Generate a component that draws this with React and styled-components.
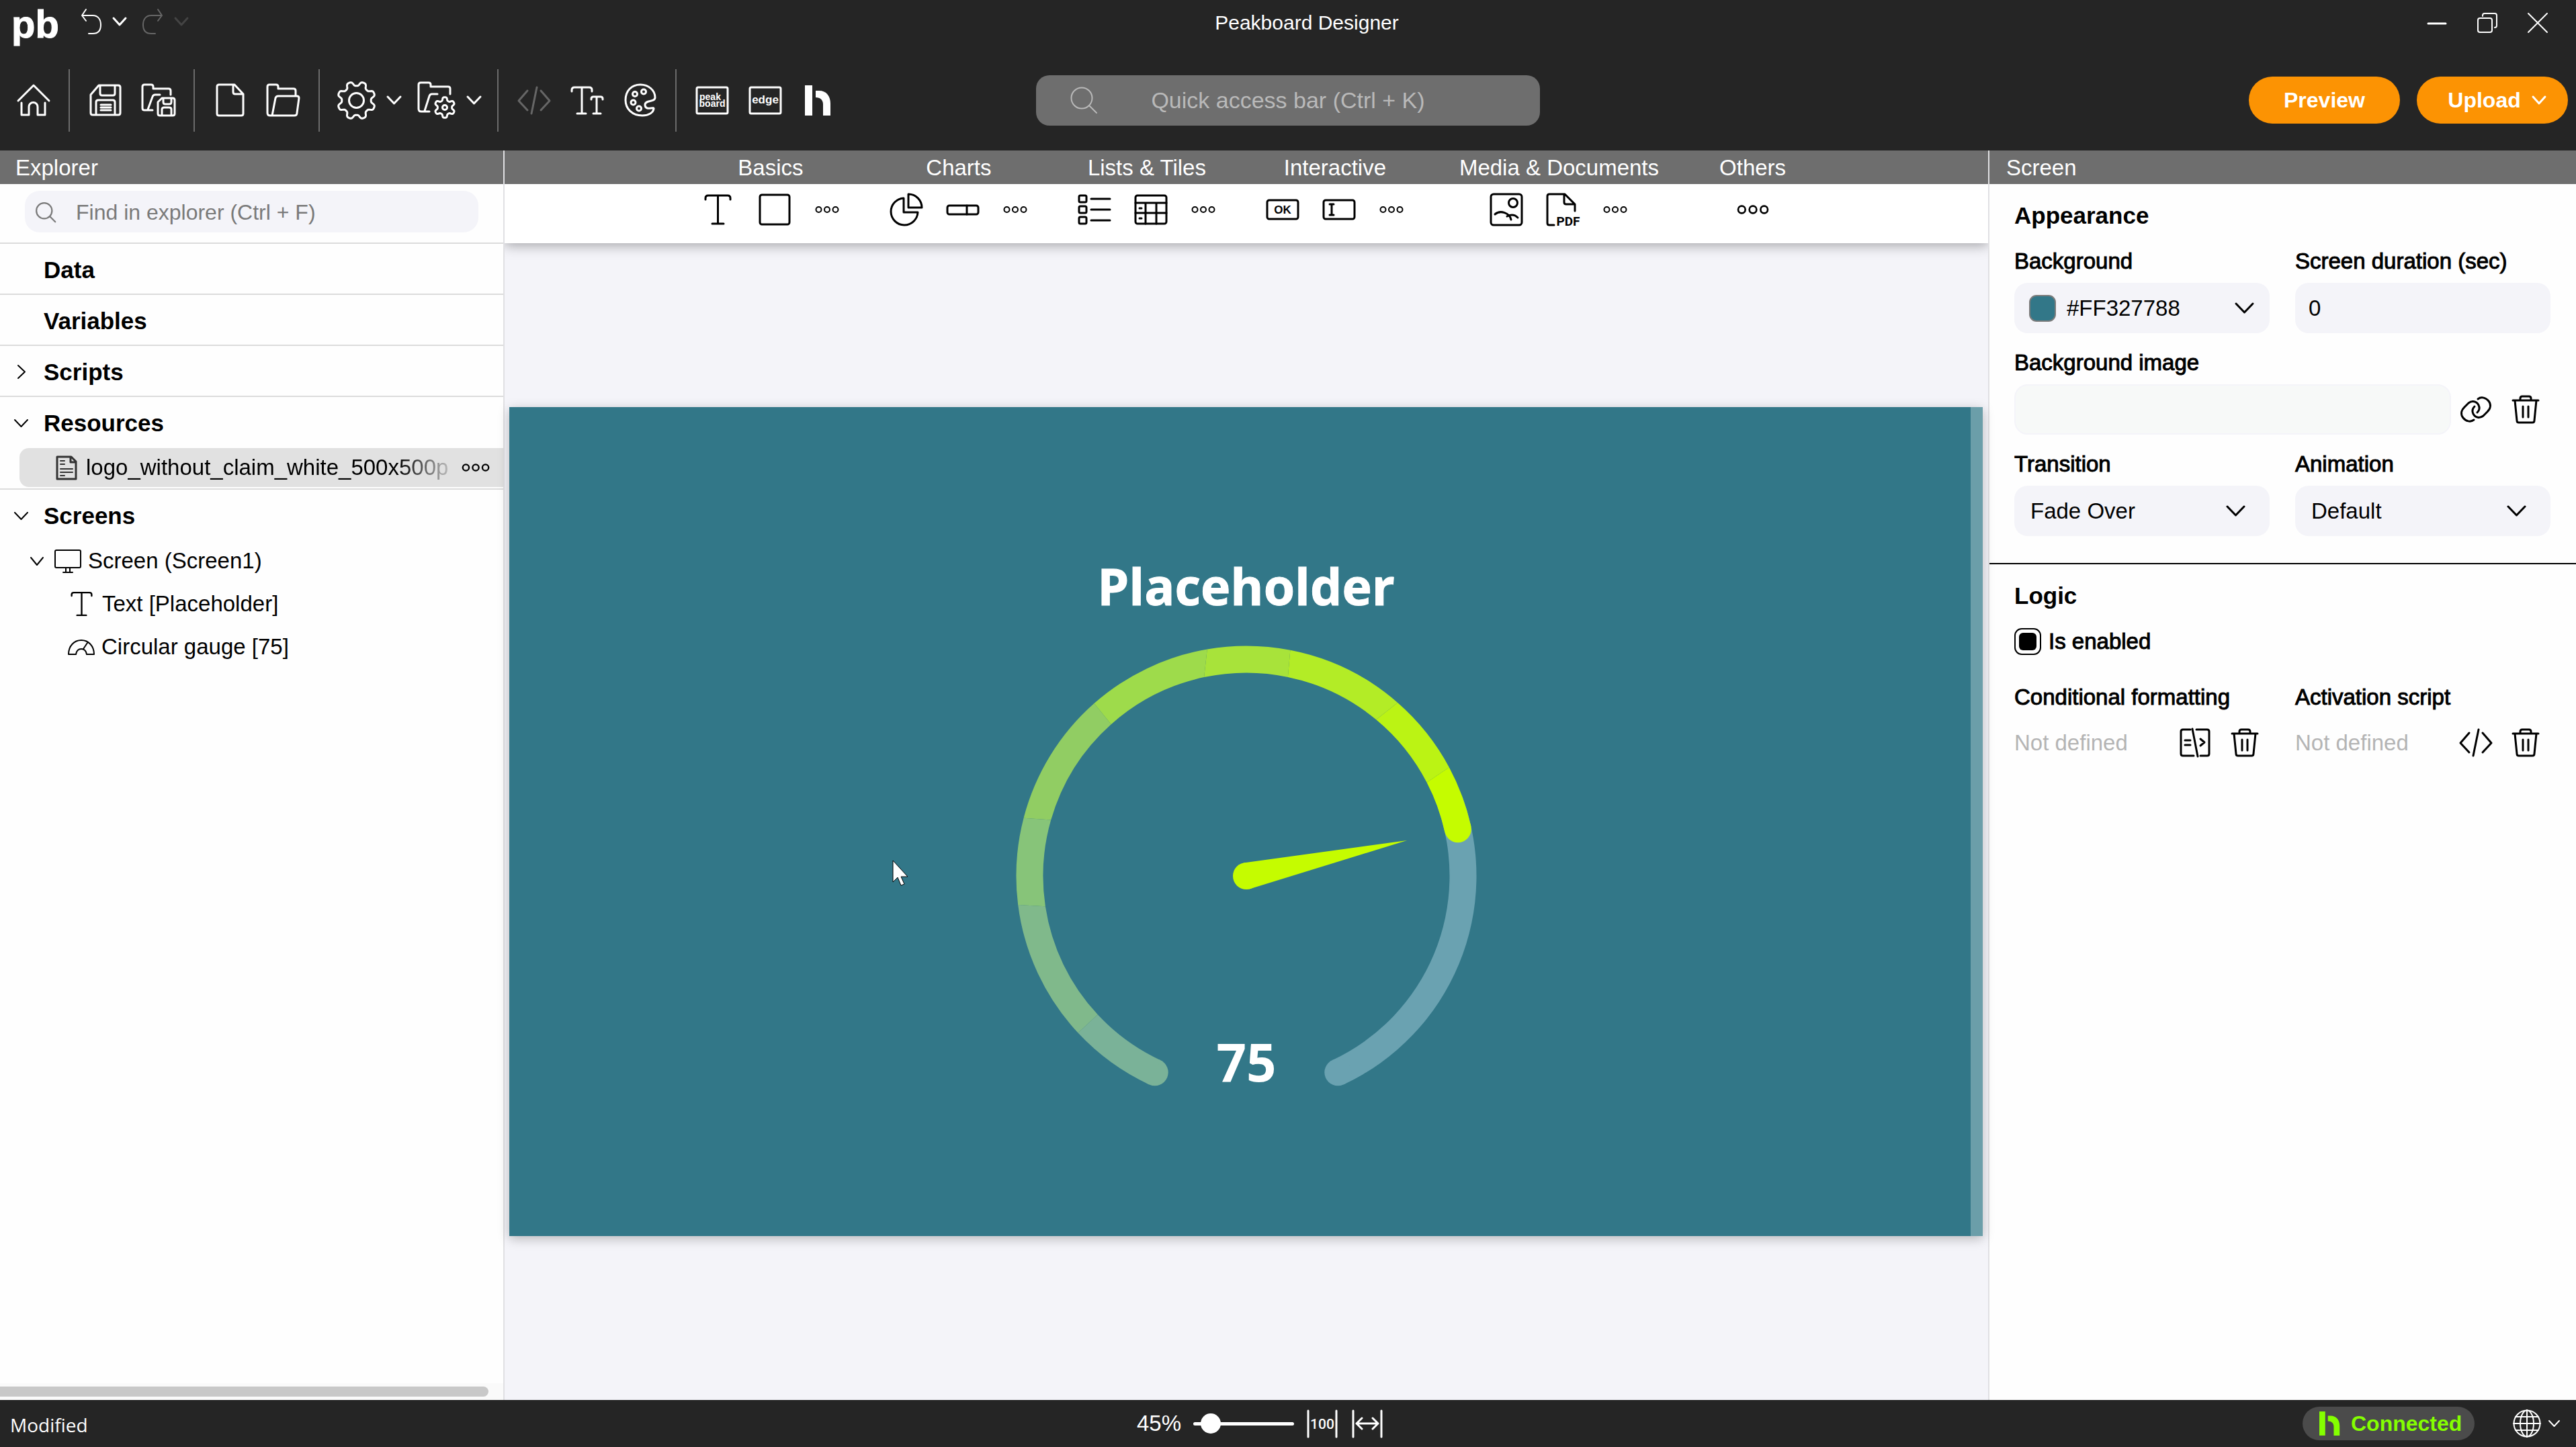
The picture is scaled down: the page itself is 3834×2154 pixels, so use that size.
import React, { useState } from "react";
import styled, { createGlobalStyle, css } from "styled-components";

const GlobalStyle = createGlobalStyle`
  *, *::before, *::after { box-sizing: border-box; }
  body { margin: 0; background: #f4f4f9; }
  body, button, input, select {
    font-family: "Liberation Sans", Arial, sans-serif;
    font-size: 33px;
    line-height: 40px;
    color: #000;
  }
  button, input, select { margin: 0; padding: 0; border: 0; background: none; outline: none; }
  h1, h2, h3, p, ul { margin: 0; padding: 0; font: inherit; list-style: none; }
`;

/* ---------- drawings ---------- */

const Drawing = styled.svg`
  flex-shrink: 0;
  overflow: visible;
`;

const Icon = ({ w, h, sw = 3, children }) => (
  <Drawing
    width={w}
    height={h}
    viewBox={`0 0 ${w} ${h}`}
    fill="none"
    stroke="currentColor"
    strokeWidth={sw}
    strokeLinecap="round"
    strokeLinejoin="round"
    aria-hidden="true"
  >
    {children}
  </Drawing>
);

const gearPath = (cx, cy, inner, outer, teeth, phase) => {
  const mid = (inner + outer) / 2;
  const amp = (outer - inner) / 2;
  const points = [];
  for (let i = 0; i < 180; i += 1) {
    const a = (i / 180) * Math.PI * 2;
    const r = mid + amp * Math.tanh(1.8 * Math.cos(teeth * (a - phase)));
    points.push(`${(cx + r * Math.sin(a)).toFixed(2)} ${(cy - r * Math.cos(a)).toFixed(2)}`);
  }
  return `M${points.join("L")}Z`;
};

const Chevron = ({ w = 23, h = 14, sw = 3 }) => (
  <Icon w={w} h={h} sw={sw}>
    <path d={`M2 2L${w / 2} ${h - 2}L${w - 2} 2`} />
  </Icon>
);
const ChevronRight = () => (
  <Icon w={14} h={23} sw={2}>
    <path d="M2 2L12 11.5L2 21" />
  </Icon>
);
const Undo = () => (
  <Icon w={30} h={40} sw={2}>
    <path d="M7 2L1 11L7 19M1 11H17C25 11 29 17 29 25S25 38 17 38H11" />
  </Icon>
);
const Redo = () => (
  <Icon w={30} h={40} sw={2}>
    <path d="M23 2L29 11L23 19M29 11H13C5 11 1 17 1 25S5 38 13 38H19" />
  </Icon>
);
const Minimize = () => (
  <Icon w={30} h={30} sw={3}>
    <path d="M2 16H28" />
  </Icon>
);
const Restore = () => (
  <Icon w={30} h={30} sw={2}>
    <rect x="1" y="8" width="21" height="21" rx="3" />
    <path d="M8 5V4q0-3 3-3H26q3 0 3 3V19q0 3-3 3" />
  </Icon>
);
const Close = () => (
  <Icon w={30} h={30} sw={2}>
    <path d="M1 1L29 29M29 1L1 29" />
  </Icon>
);
const Home = () => (
  <Icon w={50} h={48}>
    <path d="M2 25L25 2L48 25M7 28V46H18V34a6 6 0 0 1 13 0V46H42V28" />
  </Icon>
);
const Save = () => (
  <Icon w={48} h={48}>
    <path d="M14 2H43q3 0 3 3V43q0 3-3 3H5q-3 0-3-3V16zM16 2V14q0 3 3 3H35q3 0 3-3V2M10 46V27q0-3 3-3H35q3 0 3 3V46M17 31H32M17 35H32M17 39H32" />
  </Icon>
);
const SaveAll = () => (
  <Icon w={52} h={50}>
    <path d="M44 17V11q0-3-3-3H18V5q0-3-3-3H5Q2 2 2 5V37q0 3 3 3H17M28 17H21q-3 0-4 3L10 39" />
    <path d="M31 22H47q3 0 3 3V45q0 3-3 3H28q-3 0-3-3V28zM33 22V28q0 3 3 3h6q3 0 3-3V22M31 48V39q0-3 3-3h8q3 0 3 3v9" />
  </Icon>
);
const NewFile = () => (
  <Icon w={43} h={50}>
    <path d="M28 2H5Q2 2 2 5V45q0 3 3 3H38q3 0 3-3V16zM26 2V13q0 3 3 3H41" />
  </Icon>
);
const OpenFolder = () => (
  <Icon w={51} h={50}>
    <path d="M44 18V11q0-3-3-3H18V5q0-3-3-3H5Q2 2 2 5V44q0 4 4 4H42q4 0 4-4L49 22q0-3-3-3H18q-3 0-4 3L9 48" />
  </Icon>
);
const Gear = () => (
  <Icon w={57} h={57}>
    <path d={gearPath(28.5, 28.5, 21.5, 28.5, 8, Math.PI / 8)} />
    <circle cx="28.5" cy="28.5" r="11" />
  </Icon>
);
const FolderGear = () => (
  <Icon w={57} h={57}>
    <path d="M49 19V11q0-3-3-3H20V5q0-3-3-3H5Q2 2 2 5V41q0 4 4 4H18M30 19H22q-3 0-4 3L11 44" />
    <path d={gearPath(41, 39, 10.5, 15.5, 6, 0)} />
    <circle cx="41" cy="39" r="3.5" />
  </Icon>
);
const Code = () => (
  <Icon w={50} h={43}>
    <path d="M15 7L2 22L15 36M35 7L48 22L35 36M29 2L21 41" />
  </Icon>
);
const Typography = () => (
  <Icon w={50} h={43}>
    <path d="M2 8V6q0-4 4-4H28q4 0 4 4v2M17 2V41M10 41H23M31 20V19q0-3 3-3H45q3 0 3 3v1M39 16V41M34 41H45" />
  </Icon>
);
const Palette = () => (
  <Icon w={48} h={50}>
    <path d="M24 2C37 2 46 11 46 21C46 29 31 24 31 32C31 42 45 34 44 38C43 44 36 48 27 48C12 48 2 38 2 25C2 11 11 2 24 2Z" />
    <circle cx="16" cy="16" r="3.5" />
    <circle cx="29" cy="12.5" r="3.5" />
    <circle cx="13.5" cy="28.5" r="3.5" />
    <circle cx="22" cy="37.5" r="3.5" />
  </Icon>
);
const SvgWord = styled.text`
  font-family: ${(p) => p.$family || '"Liberation Sans", Arial, sans-serif'};
  font-weight: ${(p) => p.$weight || 700};
  font-size: ${(p) => p.$size}px;
  fill: ${(p) => p.$fill || "currentColor"};
  stroke: none;
  text-anchor: middle;
`;
const PeakboardBox = () => (
  <Icon w={50} h={43}>
    <rect x="2" y="2" width="46" height="39" rx="2" />
    <SvgWord $size={14} x="22" y="21">peak</SvgWord>
    <SvgWord $size={14} x="25" y="31">board</SvgWord>
  </Icon>
);
const EdgeBox = () => (
  <Icon w={50} h={43}>
    <rect x="2" y="2" width="46" height="39" rx="2" />
    <SvgWord $size={17} x="25" y="26">edge</SvgWord>
  </Icon>
);
const HubMark = ({ w = 39, h = 45 }) => (
  <Drawing width={w} height={h} viewBox="0 0 39 45" fill="currentColor" aria-hidden="true">
    <rect width="11" height="45" />
    <path d="M16 8H21C32 8 38 16 38 27V45H27V28C27 22 23 18 16 18Z" />
  </Drawing>
);
const Search = ({ size = 40, sw = 2 }) => (
  <Drawing width={size} height={size} viewBox="0 0 40 40" fill="none" stroke="currentColor" strokeWidth={sw} strokeLinecap="round" aria-hidden="true">
    <circle cx="17" cy="17" r="15.5" />
    <path d="M28 28L39 39" />
  </Drawing>
);
const TextTool = ({ w = 41, h = 46, sw = 3 }) => (
  <Drawing width={w} height={h} viewBox="0 0 41 46" fill="none" stroke="currentColor" strokeWidth={sw} strokeLinecap="round" aria-hidden="true">
    <path d="M2 8V6q0-4 4-4H35q4 0 4 4v2M20.5 2V44M12 44H29" />
  </Drawing>
);
const BoxTool = () => (
  <Icon w={48} h={48}>
    <rect x="2" y="2" width="44" height="44" rx="3" />
  </Icon>
);
const Dots = ({ w = 36, sw = 2 }) => (
  <Drawing width={w} height={w / 3} viewBox="0 0 36 12" fill="none" stroke="currentColor" strokeWidth={sw} aria-hidden="true">
    <circle cx="5.5" cy="6" r="4" />
    <circle cx="18" cy="6" r="4" />
    <circle cx="30.5" cy="6" r="4" />
  </Drawing>
);
const Pie = () => (
  <Icon w={50} h={50}>
    <path d="M21 8A20 20 0 1 0 42 29H21ZM28 2V22H48A20 20 0 0 0 28 2Z" />
  </Icon>
);
const Progress = () => (
  <Icon w={50} h={17}>
    <rect x="2" y="2" width="46" height="13" rx="3" />
    <path d="M31 2V15" />
  </Icon>
);
const ListTool = () => (
  <Icon w={50} h={46}>
    <rect x="2" y="2" width="11" height="10" rx="2" />
    <rect x="2" y="18" width="11" height="10" rx="2" />
    <rect x="2" y="34" width="11" height="10" rx="2" />
    <path d="M20 7H48M20 23H48M20 39H48" />
  </Icon>
);
const TableTool = () => (
  <Icon w={50} h={46}>
    <rect x="2" y="2" width="46" height="42" rx="3" />
    <path d="M2 13H48M2 28H48M17 13V44M33 13V44M8 21H11M8 36H11" />
  </Icon>
);
const ButtonTool = () => (
  <Icon w={50} h={32}>
    <rect x="2" y="2" width="46" height="28" rx="3" />
    <SvgWord $size={17} x="25" y="22">OK</SvgWord>
  </Icon>
);
const InputTool = () => (
  <Icon w={50} h={32}>
    <rect x="2" y="2" width="46" height="28" rx="3" />
    <path d="M11 8H17M14 8V24M11 24H17" />
  </Icon>
);
const ImageTool = () => (
  <Icon w={50} h={50}>
    <rect x="2" y="2" width="46" height="46" rx="4" />
    <circle cx="35" cy="15" r="6.5" />
    <path d="M8 32C16 25 30 30 32 40M26 35C32 32 38 33 42 37" />
  </Icon>
);
const PdfTool = () => (
  <Icon w={50} h={50}>
    <path d="M12 48H5Q2 48 2 45V5Q2 2 5 2H28L43 17V27M27 2V14q0 3 3 3H43" />
    <SvgWord $family="Roboto, sans-serif" $size={19} x="33" y="49">PDF</SvgWord>
  </Icon>
);
const FileLines = () => (
  <Icon w={32} h={37} sw={3}>
    <path d="M2 2H23L30 9V35H2ZM22 2V10H30" stroke="#333" />
    <path d="M7 8H13M7 13H13M7 20H25M7 25H25M7 30H13" stroke="#333" strokeWidth="2" />
  </Icon>
);
const Monitor = () => (
  <Icon w={40} h={35} sw={2}>
    <rect x="1" y="1" width="38" height="26" rx="2" />
    <path d="M17 27V34M23 27V34M13 34H27" />
  </Icon>
);
const GaugeIcon = () => (
  <Icon w={40} h={23} sw={2}>
    <path d="M1 22C1 10 9 1 20 1S39 10 39 22H28C27 16 24 14 20 14S13 16 12 22ZM23 14L29 5" />
  </Icon>
);
const LinkIcon = () => (
  <Icon w={46} h={37}>
    <path d="M20 34C15 38 8 36 4 31C0 26 1 20 6 15L12 9C17 5 24 6 27 12C29 16 28 20 25 23" />
    <path d="M26 3C31-1 38 1 42 6C46 11 45 17 40 22L34 28C29 32 22 31 19 25C17 21 18 17 21 14" />
  </Icon>
);
const Trash = () => (
  <Icon w={42} h={43}>
    <path d="M2 8H40M13 8V5q0-3 3-3H26q3 0 3 3V8M5 8L8 38q0 3 3 3H31q3 0 3-3L37 8M17 17V33M25 17V33" />
  </Icon>
);
const ConditionIcon = () => (
  <Icon w={46} h={45}>
    <path d="M16 3H5Q2 3 2 6V39q0 3 3 3H21M25 3H41q3 0 3 3V39q0 3-3 3H31M19 2L27 43M8 19H16M8 26H16M31 17L37 22L31 27" />
  </Icon>
);
const Globe = () => (
  <Icon w={42} h={42} sw={2}>
    <circle cx="21" cy="21" r="19.5" />
    <ellipse cx="21" cy="21" rx="10" ry="19.5" />
    <path d="M1 21H41M4 11H38M4 31H38M21 1V41" />
  </Icon>
);
const ActualSize = () => (
  <Icon w={46} h={43}>
    <path d="M2 2V41M44 2V41" />
    <SvgWord $family="Roboto, sans-serif" $size={21} $weight={500} x="23" y="29">100</SvgWord>
  </Icon>
);
const FitWidth = () => (
  <Icon w={46} h={43}>
    <path d="M2 2V41M44 2V41M7 21H39M15 13L7 21L15 29M31 13L39 21L31 29" />
  </Icon>
);

/* ---------- shell ---------- */

const Shell = styled.div`
  display: flex;
  flex-direction: column;
  min-height: 100vh;
`;
const Header = styled.header`
  background: #252525;
  color: #fff;
`;
const TitleBar = styled.div`
  display: flex;
  align-items: center;
  height: 68px;
`;
const TitleTools = styled.div`
  display: flex;
  align-items: center;
  width: 301px;
  padding-left: 17px;
`;
const Logo = styled.span`
  width: 95px;
  padding-top: 4px;
  font-size: 58px;
  font-weight: 700;
  line-height: 64px;
  -webkit-text-stroke: 1px #fff;
`;
const HistoryButton = styled.button`
  display: flex;
  align-items: center;
  justify-content: center;
  width: ${(p) => p.$w}px;
  height: 60px;
  padding-bottom: 4px;
  color: ${(p) => p.$color || "#fff"};
`;
const AppTitle = styled.h1`
  flex: 1;
  text-align: center;
  font-size: 30px;
`;
const WindowButtons = styled.div`
  display: flex;
  padding-right: 20px;
`;
const WindowButton = styled.button`
  display: grid;
  place-items: center;
  width: 75px;
  height: 68px;
  color: #fff;
`;
const Toolbar = styled.div`
  display: grid;
  grid-template-columns: 1fr 750px 1fr;
  align-items: center;
  height: 156px;
  padding-bottom: 6px;
`;
const ToolRow = styled.div`
  display: flex;
  align-items: center;
  padding: 12px 0 0 10px;
`;
const ToolButton = styled.button`
  display: grid;
  place-items: center;
  width: 79px;
  height: 79px;
  color: ${(p) => (p.disabled ? "#666" : "#fff")};
`;
const SplitTool = styled.button`
  display: flex;
  align-items: center;
  gap: 16px;
  width: 119px;
  height: 79px;
  padding-left: 13px;
  color: #fff;
`;
const ToolDivider = styled.span`
  width: 2px;
  height: 93px;
  margin: 0 13px;
  background: #6b6b6b;
`;
const QuickSearch = styled.label`
  display: grid;
  align-items: center;
  height: 75px;
  margin-top: 12px;
  padding: 0 51px;
  border-radius: 20px;
  background: #6e6e6e;
  color: #b9b9b9;
  & > * { grid-area: 1 / 1; }
`;
const QuickInput = styled.input`
  width: 100%;
  text-align: center;
  font-size: 34px;
  &::placeholder { color: #b9b9b9; opacity: 1; }
`;
const Actions = styled.div`
  display: flex;
  justify-content: flex-end;
  gap: 25px;
  padding: 12px 12px 0 0;
`;
const PillButton = styled.button`
  display: flex;
  align-items: center;
  justify-content: center;
  gap: 16px;
  width: 225px;
  height: 70px;
  padding-left: ${(p) => (p.$menu ? 14 : 0)}px;
  border-radius: 35px;
  background: #fc9303;
  color: #fff;
  font-size: 32px;
  font-weight: 700;
`;
const Body = styled.main`
  flex: 1;
  display: grid;
  grid-template-columns: 751px minmax(0, 1fr) 875px;
`;
const Band = styled.h2`
  height: 50px;
  padding: 6px ${(p) => p.$pad}px 4px;
  background: #6e6e6e;
  color: #fff;
`;

/* ---------- explorer ---------- */

const Explorer = styled.aside`
  display: flex;
  flex-direction: column;
  border-right: 2px solid #e0e0e3;
  background: #fefefe;
`;
const ExplorerSearch = styled.div`
  padding: 10px 37px 15px;
  border-bottom: 2px solid #dcdcdc;
`;
const SearchField = styled.label`
  display: flex;
  align-items: center;
  gap: 30px;
  height: 62px;
  padding: 2px 16px 0;
  border-radius: 22px;
  background: #f4f4f9;
  color: #7a7a7a;
`;
const SearchInput = styled.input`
  flex: 1;
  font-size: 32px;
  &::placeholder { color: #7a7a7a; opacity: 1; }
`;
const Group = styled.section`
  ${(p) =>
    !p.$last &&
    css`
      border-bottom: 2px solid #dcdcdc;
    `}
`;
const GroupButton = styled.button`
  display: grid;
  grid-template-columns: 23px 1fr;
  justify-items: center;
  align-items: center;
  gap: 22px;
  width: 100%;
  height: 74px;
  padding: 3px 20px 0;
`;
const GroupName = styled.span`
  justify-self: start;
  font-size: 35px;
  font-weight: 700;
`;
const TreeRow = styled.div`
  display: flex;
  align-items: center;
  gap: ${(p) => p.$gap || 10}px;
  height: 64px;
  padding-left: ${(p) => p.$indent}px;
`;
const TreeToggle = styled.button`
  display: flex;
  margin-right: 5px;
`;
const ResourceRow = styled.div`
  display: flex;
  align-items: center;
  justify-content: space-between;
  height: 58px;
  margin: 2px 0 2px 29px;
  padding: 0 20px 0 54px;
  border-radius: 14px 0 0 14px;
  background: #e1e1e1;
`;
const ResourceFile = styled.span`
  display: flex;
  align-items: center;
  gap: 13px;
`;
const ResourceName = styled.span`
  white-space: nowrap;
  mask-image: linear-gradient(to right, #000 86%, transparent 103%);
`;
const MoreButton = styled.button`
  display: flex;
`;
const ScrollTrack = styled.div`
  margin-top: auto;
  padding: 5px 0;
  background: #fafafa;
`;
const ScrollThumb = styled.div`
  width: 97%;
  height: 15px;
  border-radius: 0 8px 8px 0;
  background: #c8c8c8;
`;

/* ---------- workspace ---------- */

const Workspace = styled.section`
  display: flex;
  flex-direction: column;
`;
const Ribbon = styled.div`
  display: flex;
  justify-content: center;
  background: linear-gradient(#6e6e6e 50px, #fff 50px);
  box-shadow: 0 3px 18px rgba(0, 0, 0, 0.35);
  clip-path: inset(0 0 -40px 0);
`;
const RibbonGroup = styled.div`
  display: flex;
  flex-direction: column;
  align-items: center;
  padding: 0 20px;
`;
const RibbonLabel = styled.h3`
  height: 50px;
  padding: 6px 25px 4px;
  color: #fff;
  white-space: nowrap;
`;
const RibbonItems = styled.div`
  display: flex;
  align-items: center;
  height: 88px;
  padding-bottom: 12px;
`;
const RibbonButton = styled.button`
  display: grid;
  place-items: center;
  width: ${(p) => p.$w || 84}px;
  height: 70px;
`;
const Stage = styled.div`
  flex: 1;
  display: flex;
  align-items: center;
  padding: 0 8px 0 7px;
  background: #f4f4f9;
`;
const Artboard = styled.div`
  position: relative;
  flex: 1;
  display: flex;
  flex-direction: column;
  align-items: center;
  gap: 39px;
  aspect-ratio: 2193 / 1234;
  padding-top: 216px;
  background: #327788;
  box-shadow: 0 4px 16px rgba(0, 0, 0, 0.25);
`;
const ArtboardEdge = styled.span`
  position: absolute;
  inset: 0 0 0 auto;
  width: 18px;
  background: #6b9ea9;
`;
const ArtboardTitle = styled.p`
  font-family: "Open Sans", "Noto Sans", sans-serif;
  font-size: 75px;
  font-weight: 700;
  line-height: 100px;
  color: #fff;
  -webkit-text-stroke: 1px #fff;
`;
const Pointer = styled.svg`
  position: absolute;
  left: 570px;
  top: 674px;
`;

/* ---------- properties ---------- */

const Properties = styled.aside`
  border-left: 2px solid #e0e0e3;
  background: #fefefe;
`;
const PropertySection = styled.section`
  display: flex;
  flex-direction: column;
  padding: 27px 38px 40px 37px;
  & + & { border-top: 2px solid #000; }
`;
const SectionTitle = styled.h3`
  margin-bottom: 28px;
  font-size: 35px;
  font-weight: 700;
`;
const PropertyGrid = styled.div`
  display: grid;
  grid-template-columns: 1fr 1fr;
  gap: 24px 38px;
`;
const Property = styled.div`
  display: flex;
  flex-direction: column;
  gap: 12px;
  grid-column: ${(p) => (p.$wide ? "1 / -1" : "auto")};
`;
const PropertyLabel = styled.label`
  white-space: nowrap;
  -webkit-text-stroke: 1px #000;
`;
const fieldLook = css`
  width: 100%;
  height: 75px;
  border-radius: 20px;
  background: #f4f4f9;
`;
const TextField = styled.input`
  ${fieldLook}
  padding: 0 20px;
`;
const EmptyField = styled.input`
  ${fieldLook}
  flex: 1;
  padding: 0 20px;
  border: 2px solid #f4f4f9;
  background: #f7f9f8;
`;
const SelectBox = styled.div`
  display: grid;
  align-items: center;
  & > * { grid-area: 1 / 1; }
  & > svg {
    justify-self: end;
    margin-right: ${(p) => p.$inset}px;
    pointer-events: none;
  }
`;
const Select = styled.select`
  ${fieldLook}
  appearance: none;
  padding-left: ${(p) => p.$pad}px;
`;
const Swatch = styled.span`
  width: 40px;
  height: 40px;
  margin-left: 22px;
  border: 2px solid #7c7c7c;
  border-radius: 11px;
  background: #327788;
`;
const FieldRow = styled.div`
  display: flex;
  align-items: center;
  height: ${(p) => p.$h}px;
`;
const Unset = styled.span`
  flex: 1;
  padding-top: 2px;
  color: #b4b4b4;
`;
const FieldButton = styled.button`
  display: grid;
  place-items: center;
  width: 74px;
  height: 70px;
`;
const CheckRow = styled.label`
  display: flex;
  align-items: center;
  gap: 11px;
  margin-bottom: 43px;
  -webkit-text-stroke: 1px #000;
`;
const CheckBox = styled.input`
  appearance: none;
  display: grid;
  place-items: center;
  width: 40px;
  height: 40px;
  border: 2px solid #000;
  border-radius: 11px;
  &:checked::before {
    content: "";
    width: 26px;
    height: 26px;
    border-radius: 6px;
    background: #000;
  }
`;

/* ---------- status bar ---------- */

const StatusBar = styled.footer`
  display: flex;
  align-items: center;
  height: 70px;
  background: #252525;
  color: #fff;
`;
const StatusText = styled.span`
  width: 323px;
  padding: 4px 0 0 15px;
  font-family: "Open Sans", "Noto Sans", sans-serif;
  font-size: 28px;
`;
const ZoomTools = styled.div`
  flex: 1;
  display: flex;
  align-items: center;
  justify-content: center;
`;
const ZoomLabel = styled.label`
  margin-right: 18px;
`;
const Slider = styled.input`
  appearance: none;
  width: 150px;
  height: 30px;
  margin-right: 19px;
  &::-webkit-slider-runnable-track {
    height: 5px;
    border-radius: 3px;
    background: #fff;
  }
  &::-webkit-slider-thumb {
    appearance: none;
    width: 30px;
    height: 30px;
    margin-top: -13px;
    border-radius: 50%;
    background: #fff;
  }
`;
const ZoomButton = styled.button`
  display: flex;
  width: ${(p) => p.$w}px;
  color: #fff;
`;
const StatusRight = styled.div`
  display: flex;
  align-items: center;
  width: 407px;
`;
const ConnectedPill = styled.button`
  display: flex;
  align-items: center;
  gap: 16px;
  width: 256px;
  height: 50px;
  margin-right: 57px;
  padding-left: 25px;
  border-radius: 25px;
  background: #4b4b4b;
  color: #84ff00;
  font-size: 32px;
  font-weight: 700;
`;
const LanguageButton = styled.button`
  display: flex;
  align-items: center;
  gap: 10px;
  color: #fff;
`;

/* ---------- gauge ---------- */

const CENTER = 343;
const OUTER = 342.5;
const INNER = 302.5;
const MIDDLE = 322.5;
const polar = (r, deg) => {
  const a = (deg * Math.PI) / 180;
  return [CENTER + r * Math.sin(a), CENTER - r * Math.cos(a)].map((v) => v.toFixed(2)).join(" ");
};
const ring = (start, end) => {
  const [so, si] = start;
  const [eo, ei] = end;
  const large = eo - so > 180 ? 1 : 0;
  return `M${polar(OUTER, so)}A${OUTER} ${OUTER} 0 ${large} 1 ${polar(OUTER, eo)}L${polar(INNER, ei)}A${INNER} ${INNER} 0 ${large} 0 ${polar(INNER, si)}Z`;
};
const stops = [
  [-155, -155],
  [-133, -133],
  [-97.2, -98.6],
  [-75.4, -74],
  [-41.4, -41.7],
  [-9.8, -12],
  [11, 11.8],
  [41.1, 39.7],
  [61.8, 62.6],
  [77.5, 77.5],
];
const bandColors = ["#7ab298", "#80b98b", "#87c479", "#91cd63", "#9edb4b", "#a8e33a", "#b3ec26", "#bbf314", "#c5fc00"];

const Cap = ({ deg, fill }) => {
  const [cx, cy] = polar(MIDDLE, deg).split(" ");
  return <circle cx={cx} cy={cy} r="20" fill={fill} />;
};

const CircularGauge = ({ value }) => (
  <Drawing width="686" height="690" viewBox="0 0 686 690" role="img" aria-label={`Circular gauge ${value}`}>
    <path d={ring([70, 70], [155, 155])} fill="#6aa2b1" />
    <Cap deg={155} fill="#6aa2b1" />
    <Cap deg={-155} fill={bandColors[0]} />
    {bandColors.map((color, i) => (
      <path key={color} d={ring(stops[i], stops[i + 1])} fill={color} />
    ))}
    <Cap deg={77.5} fill={bandColors[8]} />
    <circle cx={CENTER} cy={CENTER} r="20" fill="#c5fc00" />
    <path d={`M338.7 323.5L${polar(245, 77.5)}L347.3 362.5Z`} fill="#c5fc00" />
    <SvgWord $family='"Open Sans", "Noto Sans", sans-serif' $size={78} $fill="#fff" x="343" y="649">
      {value}
    </SvgWord>
  </Drawing>
);

/* ---------- data ---------- */

const ribbonGroups = [
  { name: "Basics", items: [["Text", TextTool], ["Rectangle", BoxTool]] },
  { name: "Charts", items: [["Pie chart", Pie], ["Progress bar", Progress]] },
  { name: "Lists & Tiles", items: [["List", ListTool], ["Table", TableTool]] },
  { name: "Interactive", items: [["Button", ButtonTool], ["Text box", InputTool]] },
  { name: "Media & Documents", items: [["Image", ImageTool], ["PDF", PdfTool]] },
];

const GroupHeading = ({ name, state }) => (
  <GroupButton type="button" aria-expanded={state === "open"}>
    {state === "open" ? <Chevron sw={2} /> : state === "closed" ? <ChevronRight /> : <span />}
    <GroupName>{name}</GroupName>
  </GroupButton>
);

const Dropdown = ({ id, label, value }) => (
  <Property>
    <PropertyLabel htmlFor={id}>{label}</PropertyLabel>
    <SelectBox $inset={36}>
      <Select id={id} $pad={24} defaultValue={value}>
        <option>{value}</option>
      </Select>
      <Chevron w={29} h={17} />
    </SelectBox>
  </Property>
);

export default function App() {
  const [zoom, setZoom] = useState(45);
  const [enabled, setEnabled] = useState(true);

  return (
    <Shell>
      <GlobalStyle />
      <Header>
        <TitleBar>
          <TitleTools>
            <Logo>pb</Logo>
            <HistoryButton $w={48} aria-label="Undo"><Undo /></HistoryButton>
            <HistoryButton $w={36} aria-label="Undo history"><Chevron w={22} /></HistoryButton>
            <HistoryButton $w={62} $color="#666" aria-label="Redo"><Redo /></HistoryButton>
            <HistoryButton $w={24} $color="#444" aria-label="Redo history"><Chevron w={22} /></HistoryButton>
          </TitleTools>
          <AppTitle>Peakboard Designer</AppTitle>
          <WindowButtons>
            <WindowButton aria-label="Minimize"><Minimize /></WindowButton>
            <WindowButton aria-label="Restore"><Restore /></WindowButton>
            <WindowButton aria-label="Close"><Close /></WindowButton>
          </WindowButtons>
        </TitleBar>
        <Toolbar>
          <ToolRow>
            <ToolButton aria-label="Home"><Home /></ToolButton>
            <ToolDivider />
            <ToolButton aria-label="Save"><Save /></ToolButton>
            <ToolButton aria-label="Save as"><SaveAll /></ToolButton>
            <ToolDivider />
            <ToolButton aria-label="New"><NewFile /></ToolButton>
            <ToolButton aria-label="Open"><OpenFolder /></ToolButton>
            <ToolDivider />
            <SplitTool aria-label="Settings"><Gear /><Chevron /></SplitTool>
            <SplitTool aria-label="Project settings"><FolderGear /><Chevron /></SplitTool>
            <ToolDivider />
            <ToolButton aria-label="Script" disabled><Code /></ToolButton>
            <ToolButton aria-label="Fonts"><Typography /></ToolButton>
            <ToolButton aria-label="Colors"><Palette /></ToolButton>
            <ToolDivider />
            <ToolButton aria-label="Peakboard box"><PeakboardBox /></ToolButton>
            <ToolButton aria-label="Edge"><EdgeBox /></ToolButton>
            <ToolButton aria-label="Hub"><HubMark /></ToolButton>
          </ToolRow>
          <QuickSearch>
            <Search />
            <QuickInput aria-label="Quick access bar" placeholder="Quick access bar (Ctrl + K)" />
          </QuickSearch>
          <Actions>
            <PillButton type="button">Preview</PillButton>
            <PillButton type="button" $menu>Upload<Chevron w={22} /></PillButton>
          </Actions>
        </Toolbar>
      </Header>

      <Body>
        <Explorer>
          <Band $pad={23}>Explorer</Band>
          <ExplorerSearch>
            <SearchField>
              <Search size={30} sw={3} />
              <SearchInput aria-label="Find in explorer" placeholder="Find in explorer (Ctrl + F)" />
            </SearchField>
          </ExplorerSearch>
          <Group><GroupHeading name="Data" /></Group>
          <Group><GroupHeading name="Variables" /></Group>
          <Group><GroupHeading name="Scripts" state="closed" /></Group>
          <Group>
            <GroupHeading name="Resources" state="open" />
            <ResourceRow>
              <ResourceFile>
                <FileLines />
                <ResourceName>logo_without_claim_white_500x500p</ResourceName>
              </ResourceFile>
              <MoreButton aria-label="More"><Dots w={42} /></MoreButton>
            </ResourceRow>
          </Group>
          <Group $last>
            <GroupHeading name="Screens" state="open" />
            <TreeRow $indent={44}>
              <TreeToggle aria-label="Collapse Screen"><Chevron w={22} h={15} sw={2} /></TreeToggle>
              <Monitor />
              Screen (Screen1)
            </TreeRow>
            <TreeRow $indent={105} $gap={14}>
              <TextTool w={33} h={38} />
              Text [Placeholder]
            </TreeRow>
            <TreeRow $indent={101}>
              <GaugeIcon />
              Circular gauge [75]
            </TreeRow>
          </Group>
          <ScrollTrack><ScrollThumb /></ScrollTrack>
        </Explorer>

        <Workspace>
          <Ribbon>
            {ribbonGroups.map(({ name, items }) => (
              <RibbonGroup key={name}>
                <RibbonLabel>{name}</RibbonLabel>
                <RibbonItems>
                  {items.map(([label, Tool]) => (
                    <RibbonButton key={label} type="button" aria-label={label}><Tool /></RibbonButton>
                  ))}
                  <RibbonButton $w={72} type="button" aria-label={`More ${name}`}><Dots /></RibbonButton>
                </RibbonItems>
              </RibbonGroup>
            ))}
            <RibbonGroup>
              <RibbonLabel>Others</RibbonLabel>
              <RibbonItems>
                <RibbonButton type="button" aria-label="More others"><Dots w={48} /></RibbonButton>
              </RibbonItems>
            </RibbonGroup>
          </Ribbon>
          <Stage>
            <Artboard>
              <ArtboardTitle>Placeholder</ArtboardTitle>
              <CircularGauge value={75} />
              <ArtboardEdge />
              <Pointer width="26" height="40" viewBox="0 0 26 40" fill="#fff" stroke="#000" strokeWidth="1">
                <path d="M1 1V33L8 26L13 38L18 36L13 25H23Z" />
              </Pointer>
            </Artboard>
          </Stage>
        </Workspace>

        <Properties>
          <Band $pad={25}>Screen</Band>
          <PropertySection>
            <SectionTitle>Appearance</SectionTitle>
            <PropertyGrid>
              <Property>
                <PropertyLabel htmlFor="background">Background</PropertyLabel>
                <SelectBox $inset={23}>
                  <Select id="background" $pad={78} defaultValue="#FF327788">
                    <option>#FF327788</option>
                  </Select>
                  <Swatch />
                  <Chevron w={29} h={17} />
                </SelectBox>
              </Property>
              <Property>
                <PropertyLabel htmlFor="duration">Screen duration (sec)</PropertyLabel>
                <TextField id="duration" defaultValue="0" />
              </Property>
              <Property $wide>
                <PropertyLabel htmlFor="image">Background image</PropertyLabel>
                <FieldRow $h={75}>
                  <EmptyField id="image" />
                  <FieldButton type="button" aria-label="Choose image"><LinkIcon /></FieldButton>
                  <FieldButton type="button" aria-label="Remove image"><Trash /></FieldButton>
                </FieldRow>
              </Property>
              <Dropdown id="transition" label="Transition" value="Fade Over" />
              <Dropdown id="animation" label="Animation" value="Default" />
            </PropertyGrid>
          </PropertySection>
          <PropertySection>
            <SectionTitle>Logic</SectionTitle>
            <CheckRow>
              <CheckBox type="checkbox" checked={enabled} onChange={(e) => setEnabled(e.target.checked)} />
              Is enabled
            </CheckRow>
            <PropertyGrid>
              <Property>
                <PropertyLabel as="span">Conditional formatting</PropertyLabel>
                <FieldRow $h={70}>
                  <Unset>Not defined</Unset>
                  <FieldButton type="button" aria-label="Edit formatting"><ConditionIcon /></FieldButton>
                  <FieldButton type="button" aria-label="Remove formatting"><Trash /></FieldButton>
                </FieldRow>
              </Property>
              <Property>
                <PropertyLabel as="span">Activation script</PropertyLabel>
                <FieldRow $h={70}>
                  <Unset>Not defined</Unset>
                  <FieldButton type="button" aria-label="Edit script"><Code /></FieldButton>
                  <FieldButton type="button" aria-label="Remove script"><Trash /></FieldButton>
                </FieldRow>
              </Property>
            </PropertyGrid>
          </PropertySection>
        </Properties>
      </Body>

      <StatusBar>
        <StatusText>Modified</StatusText>
        <ZoomTools>
          <ZoomLabel htmlFor="zoom">{zoom}%</ZoomLabel>
          <Slider id="zoom" type="range" min="0" max="500" value={zoom} onChange={(e) => setZoom(Number(e.target.value))} />
          <ZoomButton $w={67} aria-label="Actual size"><ActualSize /></ZoomButton>
          <ZoomButton $w={46} aria-label="Fit width"><FitWidth /></ZoomButton>
        </ZoomTools>
        <StatusRight>
          <ConnectedPill type="button"><HubMark w={31} h={36} />Connected</ConnectedPill>
          <LanguageButton aria-label="Language"><Globe /><Chevron w={19} h={12} sw={2} /></LanguageButton>
        </StatusRight>
      </StatusBar>
    </Shell>
  );
}
